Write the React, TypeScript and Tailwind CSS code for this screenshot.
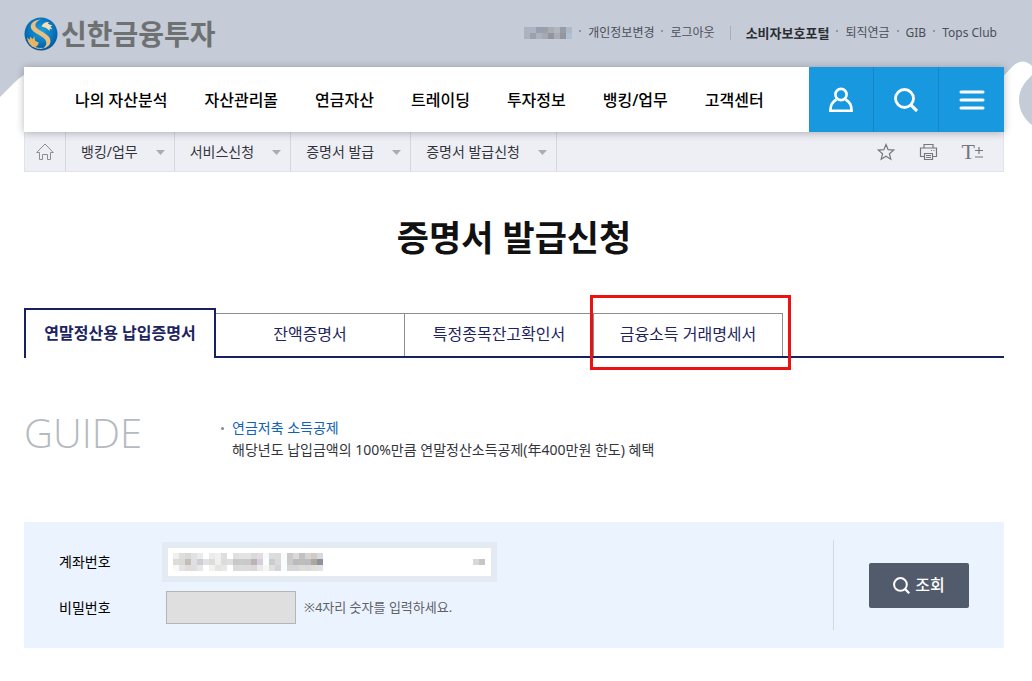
import { useState } from 'react';

const MENU = ['나의 자산분석', '자산관리몰', '연금자산', '트레이딩', '투자정보', '뱅킹/업무', '고객센터'];
const CRUMBS = ['뱅킹/업무', '서비스신청', '증명서 발급', '증명서 발급신청'];
const TABS = ['연말정산용 납입증명서', '잔액증명서', '특정종목잔고확인서', '금융소득 거래명세서'];

// Pixelated stand-ins for private data, one row of 6px cells per array.
const USER_CELLS = [
  ['#aeb3bd', '#a9b5c6', '#9a9fab', '#9ba0aa', '#a9acb4', '#b3b6bb', '#999ca6', '#adb8c9'],
  ['#aeb2ba', '#9aa1b0', '#adb2bd', '#a5a9b3', '#93949c', '#a9adb6', '#94969e', '#afbfd4'],
];
const ACCOUNT_CELLS = [
  ['#f0f0ee', '#dedede', '#d9d9d6', '#e0e2e5', '#e9ebec', '#fff', '#ececec', '#f0f0f0', '#dedede', '#fff', '#e0e0e0', '#e3e3df', '#e0e4e4', '#dadada', '#e1dde2', '#f8fafa', '#dcdcdc', '#dcdcda', '#f8fcfc', '#cacaca', '#dadada', '#c2c1c0', '#d4d4d4', '#d0ccc4', '#d4dae0'],
  ['#dcdcdc', '#d9d9d9', '#c0beb9', '#e0e0e0', '#cecfd1', '#e2e2e6', '#dcdcdc', '#f2efec', '#dcdcdc', '#dfdfe2', '#c8c8c6', '#cacaca', '#c9c9c7', '#bbb3b5', '#d4cfdc', '#f9ffff', '#cacccd', '#dadada', '#f8fcfc', '#cacaca', '#b9bcbe', '#bebdba', '#b9bcc1', '#aea79f', '#8c939c'],
  ['#f8f8f6', '#e4e4e4', '#e0dcda', '#dedede', '#e6e8e8', '#fff', '#f2f2f0', '#e4e4e4', '#e8e8e8', '#fff', '#dadada', '#dcdcda', '#dcdcdc', '#d9d9d9', '#eaeaea', '#f6f6f6', '#e0e0e0', '#d4d4d4', '#f8fcfc', '#d6d6d6', '#d6d6d6', '#dcdcd8', '#dadada', '#e0dfda', '#e2e2e4'],
];

function Mosaic({ rows, className }: { rows: string[][]; className?: string }) {
  const width = rows[0].length * 6;
  const height = rows.length * 6;
  return (
    <svg width={width} height={height} className={className} shapeRendering="crispEdges" aria-hidden="true">
      {rows.map((row, y) =>
        row.map((fill, x) => <rect key={`${x}-${y}`} x={x * 6} y={y * 6} width="6" height="6" fill={fill} />),
      )}
    </svg>
  );
}

function Dot() {
  return <li aria-hidden="true" className="mx-[7px] mb-1 size-[2px] bg-[#8f95a1]" />;
}

function Logo() {
  return (
    <a href="#" className="flex items-center gap-[3px]" aria-label="신한금융투자">
      <svg width="34" height="34" viewBox="0 0 34 34" aria-hidden="true">
        <defs>
          <radialGradient id="globe" cx="0.5" cy="0.4" r="0.6">
            <stop offset="0" stopColor="#1ea0dc" />
            <stop offset="0.6" stopColor="#0878c0" />
            <stop offset="1" stopColor="#04569c" />
          </radialGradient>
        </defs>
        <circle cx="17" cy="17" r="16.5" fill="url(#globe)" />
        <path
          d="M17 2.500C10.500 3 6.500 6 6.800 9.800C7.200 14 11.500 15.800 15.500 18.200C19.500 20.600 22.300 22.800 22.300 26C22.300 28.400 20.800 30.300 18.500 31.800C23.300 30.600 26.500 27.800 26.500 24.200C26.500 20 22.800 17.500 18.800 15C15 12.700 11.500 11 11.400 8.200C11.300 5.800 13.500 3.700 17 2.500z"
          fill="#e8bf82"
        />
        <path d="M17.500 9.500C18.500 6.500 21.500 4.600 25 5l-1.200 1.700 4.900 2.100-2.300.5 2 3.200-2.800-1 .2 2.600C23.500 11.500 21 10.200 17.500 9.500z" fill="#f6deb5" />
        <path d="M3 20.500l2.800 2.300.6-3.200 2.200 2.700 1.700-3.100 1 4.800 3.400 1.500C14.500 28 12.700 30 10 30 7 29.500 4.300 26.500 3 20.500z" fill="#eab35e" />
        <path d="M8 28.500C11 31 14.500 31.800 18.500 31.300" fill="none" stroke="#e8bf82" />
      </svg>
      <span className="text-[28px] leading-[34px] font-bold text-[#6e7171]">신한금융투자</span>
    </a>
  );
}

function SearchIcon({ size }: { size: number }) {
  return (
    <svg width={size} height={size} viewBox="0 0 24 24" fill="none" stroke="currentColor" strokeWidth="2.800" aria-hidden="true">
      <circle cx="10.500" cy="10.500" r="9" />
      <path d="M16.800 16.800L23 23" strokeWidth="3.200" />
    </svg>
  );
}

function Header() {
  return (
    <header className="relative isolate">
      <svg className="absolute inset-0 -z-10 h-[140px] w-full" aria-hidden="true">
        <rect width="100%" height="140" fill="#c5cbd7" />
        <path d="M0 97L14 83Q19 78 24 75H60V140H0z" fill="#fff" />
        <rect x="24" y="100" width="96%" height="40" fill="#fff" />
        <svg x="100%" width="60" height="140" overflow="visible">
          <path d="M-36 84L-19 66Q-9 57 0 66V140H-36z" fill="#fff" />
          <path d="M0 75C-7 82-13 89-13 100S-7 120 0 125z" fill="#c5cbd7" />
        </svg>
      </svg>

      <div className="flex h-[67px] items-center justify-between pr-[35px] pl-6">
        <Logo />
        <ul className="flex items-center text-xs text-[#4c4f57]">
          <li><Mosaic rows={USER_CELLS} /></li>
          <Dot />
          <li><a href="#">개인정보변경</a></li>
          <Dot />
          <li><a href="#">로그아웃</a></li>
          <li aria-hidden="true" className="mx-[15px] h-[14px] w-px bg-[#a9aebb]" />
          <li><a href="#" className="text-[13px] font-bold text-[#2b2d33]">소비자보호포털</a></li>
          <Dot />
          <li><a href="#">퇴직연금</a></li>
          <Dot />
          <li><a href="#">GIB</a></li>
          <Dot />
          <li><a href="#">Tops Club</a></li>
        </ul>
      </div>

      <div className="relative mr-7 ml-6 flex h-[65px] justify-between bg-white shadow-[0_1px_8px_rgba(0,0,0,0.28)]">
        <nav className="flex items-center gap-[37px] pt-px pl-[51px] text-base font-medium whitespace-nowrap text-black">
          {MENU.map((item) => (
            <a key={item} href="#">{item}</a>
          ))}
        </nav>
        <div className="flex divide-x divide-[#1586c8] bg-[#1899df] text-white">
          <button type="button" aria-label="마이페이지" className="grid w-[65px] place-items-center">
            <svg width="26" height="26" viewBox="0 0 26 26" fill="none" stroke="currentColor" strokeWidth="2.600" aria-hidden="true">
              <circle cx="13" cy="7.500" r="5.600" />
              <path d="M8.500 12.500C4.500 14.500 2.400 18.500 2.300 23.700H23.700C23.600 18.500 21.500 14.500 17.500 12.500" />
            </svg>
          </button>
          <button type="button" aria-label="검색" className="grid w-[65px] place-items-center">
            <SearchIcon size={24} />
          </button>
          <button type="button" aria-label="전체메뉴" className="grid w-[65px] place-items-center">
            <svg width="26" height="20" viewBox="0 0 26 20" stroke="currentColor" strokeWidth="3" strokeLinecap="round" aria-hidden="true">
              <path d="M2 2h22M2 10h22M2 18h22" />
            </svg>
          </button>
        </div>
      </div>

      <div className="mr-7 ml-6 flex h-10 justify-between border border-t-0 border-[#e2e3ea] bg-[#eeeff5] text-sm text-[#33353b]">
        <div className="flex">
          <a href="#" aria-label="홈" className="grid w-[41px] place-items-center border-r border-[#d5d7df] text-[#8a8d94]">
            <svg width="18" height="17" viewBox="0 0 18 17" fill="none" stroke="currentColor" aria-hidden="true">
              <path d="M.7 9.500L9 1l8.300 8.500H14.500V16.500H11.500V11.500H6.500V16.500H3.500V9.500z" />
            </svg>
          </a>
          {CRUMBS.map((crumb) => (
            <button key={crumb} type="button" className="flex items-center gap-[18px] border-r border-[#d5d7df] pt-px pr-[9px] pl-[15px]">
              {crumb}
              <svg width="9" height="5" viewBox="0 0 9 5" fill="#a9acb7" aria-hidden="true">
                <path d="M0 0h9L4.500 5z" />
              </svg>
            </button>
          ))}
        </div>
        <div className="flex items-center gap-6 pt-px pr-5 text-[#74777d]">
          <button type="button" aria-label="즐겨찾기">
            <svg width="18" height="18" viewBox="0 0 18 18" fill="none" stroke="currentColor" strokeWidth="1.200" aria-hidden="true">
              <path d="M9 1.500l2.100 5.200 5.600.4-4.300 3.600 1.400 5.500L9 13.200l-4.800 3 1.400-5.500L1.300 7.100l5.600-.4z" />
            </svg>
          </button>
          <button type="button" aria-label="인쇄">
            <svg width="19" height="18" viewBox="0 0 19 18" fill="none" stroke="currentColor" strokeWidth="1.200" aria-hidden="true">
              <path d="M5 5V1.500h9V5M5 13.500H1.500V5h16v8.500H14" />
              <path d="M5.500 10.500h8v6h-8zM7 12.500h5M7 14.500h5M12 7.500h1M14.500 7.500h1" />
            </svg>
          </button>
          <button type="button" aria-label="글자크기" className="flex items-center">
            <span className="font-['Liberation_Serif',serif] text-[22px] leading-5">T</span>
            <svg width="8" height="12" viewBox="0 0 8 12" stroke="currentColor" strokeWidth="1.200" aria-hidden="true">
              <path d="M0 4.500h8M4 1v7M0 11h8" />
            </svg>
          </button>
        </div>
      </div>
    </header>
  );
}

function Tabs() {
  const [current, setCurrent] = useState(0);
  return (
    <div role="tablist" className="flex h-[50px] items-end text-base text-[#1d2460]">
      {TABS.map((tab, i) => {
        const last = i === TABS.length - 1;
        return i === current ? (
          <button
            key={tab}
            type="button"
            role="tab"
            aria-selected="true"
            className="h-[50px] w-[192px] border-2 border-b-0 border-[#162163] pb-[3px] font-semibold"
          >
            {tab}
          </button>
        ) : (
          <div key={tab} className="relative h-[45px] w-[189px] border-b-2 border-[#162163]">
            <button
              type="button"
              role="tab"
              aria-selected="false"
              onClick={() => setCurrent(i)}
              className="h-full w-full border-t border-r border-[#8a9091] pb-[3px]"
            >
              {tab}
            </button>
            {last && <span className="pointer-events-none absolute -top-[18px] -right-2 h-[75px] w-[201px] border-3 border-[#ec1212]" />}
          </div>
        );
      })}
      <div className="h-[2px] flex-1 bg-[#162163]" />
    </div>
  );
}

function SearchForm() {
  return (
    <form className="mt-[61px] flex items-center justify-between bg-[#ebf4fe] py-[18px] pl-[35px] text-sm text-black">
      <div className="grid grid-cols-[103px_auto] items-center gap-y-[9px] self-start pt-[2px]">
        <label htmlFor="account">계좌번호</label>
        <div className="relative w-[335px]">
          <select id="account" className="block h-10 w-full appearance-none border-[6px] border-[#e4eaf2] bg-white" />
          <Mosaic rows={ACCOUNT_CELLS} className="pointer-events-none absolute top-[11px] left-[11px]" />
          <Mosaic rows={[['#d8d8d8', '#c6c6c6']]} className="pointer-events-none absolute top-[17px] right-3" />
        </div>
        <label htmlFor="password">비밀번호</label>
        <div className="flex items-center gap-2 pl-1">
          <input id="password" type="password" maxLength={4} className="h-[33px] w-[130px] border border-[#b5b5b5] bg-[#dfdfdf] px-2" />
          <span className="text-[13px] text-[#5f6166]">※4자리 숫자를 입력하세요.</span>
        </div>
      </div>
      <div className="flex h-[90px] items-center border-l border-[#d3d8e2] px-[35px]">
        <button type="button" className="flex h-[45px] w-[100px] items-center justify-center gap-[5px] rounded-xs bg-[#525b6c] text-base font-medium text-white">
          <SearchIcon size={17} />
          조회
        </button>
      </div>
    </form>
  );
}

export default function App() {
  return (
    <div className="min-h-screen bg-white font-['Noto_Sans','Noto_Sans_CJK_KR',sans-serif]">
      <Header />
      <main className="mr-7 ml-6">
        <h1 className="pt-10 pb-11 text-center text-[35px] leading-[52px] font-bold text-[#111]">증명서 발급신청</h1>
        <Tabs />
        <section className="mt-[50px] flex">
          <h2 className="w-[197px] font-['Open_Sans',sans-serif] text-[40px] leading-[50px] font-light text-[#b5bac0]">GUIDE</h2>
          <ul className="pt-[9px] text-sm leading-[22px] text-[#33353b]">
            <li className="flex">
              <span className="mt-[10px] mr-2 size-[3px] rounded-full bg-[#888]" />
              <div>
                <strong className="font-normal text-[#1263b4]">연금저축 소득공제</strong>
                <p>해당년도 납입금액의 100%만큼 연말정산소득공제(年400만원 한도) 혜택</p>
              </div>
            </li>
          </ul>
        </section>
        <SearchForm />
      </main>
    </div>
  );
}
